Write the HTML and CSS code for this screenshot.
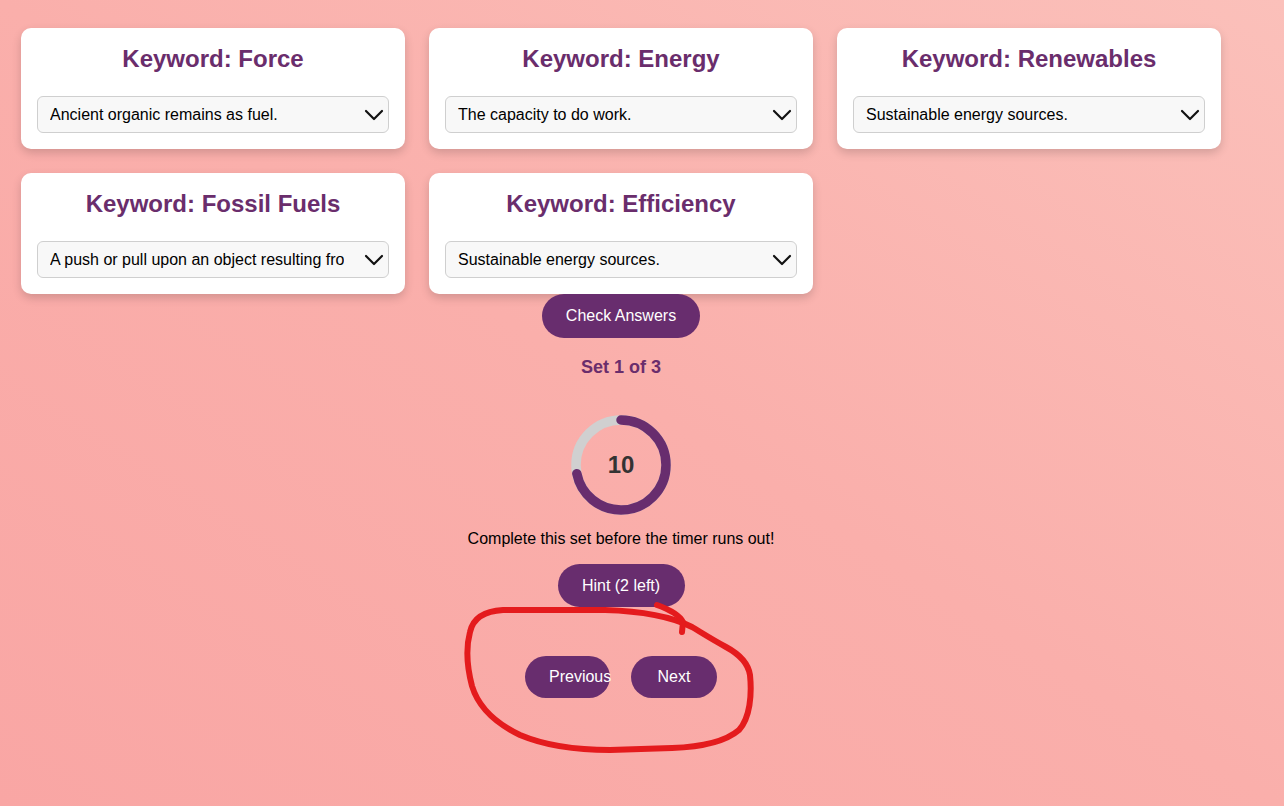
FILE: index.html
```html
<!DOCTYPE html>
<html lang="en">
<head>
<meta charset="utf-8">
<title>Keyword Match</title>
<link rel="stylesheet" href="styles.css">
</head>
<body>
<main class="quiz">
  <section class="cards">
    <div class="card">
      <h2 class="card-title">Keyword: Force</h2>
      <div class="select-wrap">
        <select class="answer"><option>Ancient organic remains as fuel.</option></select>
        <svg class="chev" viewBox="0 0 20 12" width="20" height="12"><path d="M2 2 L10 10 L18 2" fill="none" stroke="#111" stroke-width="2.2" stroke-linecap="round" stroke-linejoin="round"/></svg>
      </div>
    </div>
    <div class="card">
      <h2 class="card-title">Keyword: Energy</h2>
      <div class="select-wrap">
        <select class="answer"><option>The capacity to do work.</option></select>
        <svg class="chev" viewBox="0 0 20 12" width="20" height="12"><path d="M2 2 L10 10 L18 2" fill="none" stroke="#111" stroke-width="2.2" stroke-linecap="round" stroke-linejoin="round"/></svg>
      </div>
    </div>
    <div class="card">
      <h2 class="card-title">Keyword: Renewables</h2>
      <div class="select-wrap">
        <select class="answer"><option>Sustainable energy sources.</option></select>
        <svg class="chev" viewBox="0 0 20 12" width="20" height="12"><path d="M2 2 L10 10 L18 2" fill="none" stroke="#111" stroke-width="2.2" stroke-linecap="round" stroke-linejoin="round"/></svg>
      </div>
    </div>
    <div class="card">
      <h2 class="card-title">Keyword: Fossil Fuels</h2>
      <div class="select-wrap">
        <select class="answer"><option>A push or pull upon an object resulting from its interaction with another object.</option></select>
        <svg class="chev" viewBox="0 0 20 12" width="20" height="12"><path d="M2 2 L10 10 L18 2" fill="none" stroke="#111" stroke-width="2.2" stroke-linecap="round" stroke-linejoin="round"/></svg>
      </div>
    </div>
    <div class="card">
      <h2 class="card-title">Keyword: Efficiency</h2>
      <div class="select-wrap">
        <select class="answer"><option>Sustainable energy sources.</option></select>
        <svg class="chev" viewBox="0 0 20 12" width="20" height="12"><path d="M2 2 L10 10 L18 2" fill="none" stroke="#111" stroke-width="2.2" stroke-linecap="round" stroke-linejoin="round"/></svg>
      </div>
    </div>
  </section>

  <section class="controls">
    <button class="btn btn-check">Check Answers</button>
    <p class="set-label">Set 1 of 3</p>
    <div class="timer">
      <svg class="timer-ring" viewBox="0 0 100 100" width="100" height="100">
        <circle cx="50" cy="50" r="45" fill="none" stroke="#d0d0d0" stroke-width="9.5"/>
        <circle cx="50" cy="50" r="45" fill="none" stroke="#682d6e" stroke-width="9.5" stroke-linecap="round" stroke-dasharray="203 283" transform="rotate(-90 50 50)"/>
      </svg>
      <span class="timer-num">10</span>
    </div>
    <p class="timer-msg">Complete this set before the timer runs out!</p>
    <button class="btn btn-hint">Hint (2 left)</button>
    <div class="nav">
      <button class="btn btn-prev">Previous</button>
      <button class="btn btn-next">Next</button>
    </div>
  </section>
</main>

<svg class="annotation" width="1284" height="806" viewBox="0 0 1284 806">
  <path d="M692 627 C672 617 640 611 605 610 L503 610 C485 611 473 618 470 632 C466 647 467 667 472 686 C478 706 493 722 520 735 C546 746 580 750 610 750 L672 748 C701 747 725 742 739 730 C750 718 752 695 750 675 C748 662 739 654 726 647 C713 640 702 633 692 627" fill="none" stroke="#e41b1d" stroke-width="6" stroke-linecap="round" stroke-linejoin="round"/>
  <path d="M657 605 C668 609 679 614 683 622 L682 632" fill="none" stroke="#e41b1d" stroke-width="6" stroke-linecap="round" stroke-linejoin="round"/>
</svg>
</body>
</html>
```

FILE: styles.css
```css
* { box-sizing: border-box; }

html, body { height: 100%; }

body {
  margin: 0;
  min-height: 806px;
  font-family: "Liberation Sans", Arial, sans-serif;
  background: linear-gradient(to top right, #f9a6a4 0%, #faafab 50%, #fbc0ba 100%);
  color: #000;
  position: relative;
  overflow: hidden;
}

.quiz {
  width: 1200px;
  margin-left: 21px;
  padding-top: 28px;
}

.cards {
  display: grid;
  grid-template-columns: repeat(3, 384px);
  gap: 24px;
}

.card {
  background: #fff;
  border-radius: 10px;
  padding: 17px 16px 16px;
  box-shadow: 0 4px 10px rgba(0, 0, 0, 0.16);
  height: 121px;
}

.card-title {
  margin: 0 0 23px;
  text-align: center;
  font-size: 24px;
  font-weight: bold;
  line-height: 28px;
  color: #6a2d6c;
}

.select-wrap {
  position: relative;
}

.answer {
  appearance: none;
  -webkit-appearance: none;
  width: 100%;
  height: 37px;
  padding: 0 44px 0 12px;
  border: 1px solid #cfcfcf;
  border-radius: 6px;
  background: #f8f8f8;
  font-family: "Liberation Sans", Arial, sans-serif;
  font-size: 16px;
  color: #000;
  white-space: nowrap;
  overflow: hidden;
  text-overflow: clip;
}

.chev {
  position: absolute;
  right: 5px;
  top: 13px;
  pointer-events: none;
}

.controls {
  display: flex;
  flex-direction: column;
  align-items: center;
}

.btn {
  border: none;
  background: #682d6e;
  color: #fff;
  font-family: "Liberation Sans", Arial, sans-serif;
  font-size: 16px;
  border-radius: 24px;
  padding: 0 24px;
  height: 43px;
  white-space: nowrap;
  cursor: pointer;
}

.btn-check {
  height: 44px;
  width: 158px;
  padding: 0;
}

.set-label {
  margin: 19px 0 0;
  font-size: 18px;
  font-weight: bold;
  line-height: 21px;
  color: #6a2d6c;
}

.timer {
  position: relative;
  margin-top: 37px;
  width: 100px;
  height: 100px;
}

.timer-ring { display: block; }

.timer-num {
  position: absolute;
  inset: 0;
  display: flex;
  align-items: center;
  justify-content: center;
  font-size: 24px;
  font-weight: bold;
  color: #333;
}

.timer-msg {
  margin: 15px 0 0;
  font-size: 16px;
  line-height: 18px;
}

.btn-hint {
  margin-top: 16px;
  width: 127px;
  padding: 0;
}

.nav {
  margin-top: 49px;
  display: flex;
  gap: 21px;
}

.btn-prev {
  width: 85px;
  height: 42px;
  padding: 0 0 0 24px;
  text-align: left;
}

.btn-next {
  width: 86px;
  height: 42px;
  padding: 0;
}

.annotation {
  position: absolute;
  left: 0;
  top: 0;
  pointer-events: none;
}
```
